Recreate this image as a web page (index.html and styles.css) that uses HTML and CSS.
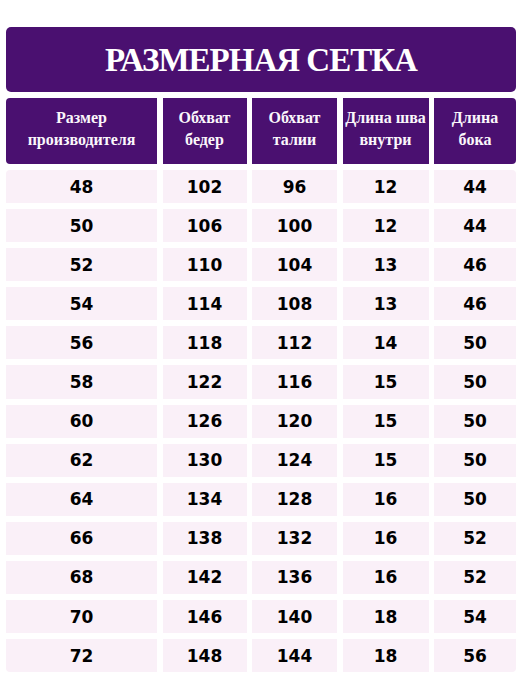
FILE: index.html
```html
<!DOCTYPE html>
<html lang="ru">
<head>
<meta charset="utf-8">
<link rel="stylesheet" href="styles.css">
</head>
<body>
<div class="sheet">
  <div class="title">РАЗМЕРНАЯ СЕТКА</div>
  <div class="grid">
    <div class="hd first">Размер<br>производителя</div>
    <div class="hd">Обхват<br>бедер</div>
    <div class="hd">Обхват<br>талии</div>
    <div class="hd">Длина шва<br>внутри</div>
    <div class="hd last">Длина<br>бока</div>

    <div class="c tl">48</div><div class="c">102</div><div class="c">96</div><div class="c">12</div><div class="c tr">44</div>
    <div class="c">50</div><div class="c">106</div><div class="c">100</div><div class="c">12</div><div class="c">44</div>
    <div class="c">52</div><div class="c">110</div><div class="c">104</div><div class="c">13</div><div class="c">46</div>
    <div class="c">54</div><div class="c">114</div><div class="c">108</div><div class="c">13</div><div class="c">46</div>
    <div class="c">56</div><div class="c">118</div><div class="c">112</div><div class="c">14</div><div class="c">50</div>
    <div class="c">58</div><div class="c">122</div><div class="c">116</div><div class="c">15</div><div class="c">50</div>
    <div class="c">60</div><div class="c">126</div><div class="c">120</div><div class="c">15</div><div class="c">50</div>
    <div class="c">62</div><div class="c">130</div><div class="c">124</div><div class="c">15</div><div class="c">50</div>
    <div class="c">64</div><div class="c">134</div><div class="c">128</div><div class="c">16</div><div class="c">50</div>
    <div class="c">66</div><div class="c">138</div><div class="c">132</div><div class="c">16</div><div class="c">52</div>
    <div class="c">68</div><div class="c">142</div><div class="c">136</div><div class="c">16</div><div class="c">52</div>
    <div class="c">70</div><div class="c">146</div><div class="c">140</div><div class="c">18</div><div class="c">54</div>
    <div class="c bl">72</div><div class="c">148</div><div class="c">144</div><div class="c">18</div><div class="c br">56</div>
  </div>
</div>
</body>
</html>
```

FILE: styles.css
```css
html, body {
  margin: 0;
  padding: 0;
  background: #ffffff;
}
.sheet {
  padding: 27px 0 0 6px;
  width: 510px;
}
.title {
  height: 65px;
  background: #4a1070;
  border-radius: 5px;
  color: #ffffff;
  font-family: "Liberation Serif", "DejaVu Serif", serif;
  font-weight: bold;
  font-size: 33px;
  letter-spacing: -1px;
  display: flex;
  align-items: center;
  justify-content: center;
  padding-top: 1px;
  box-sizing: border-box;
}
.grid {
  margin-top: 6px;
  display: grid;
  grid-template-columns: 151px 84px 85px 86px 82px;
  column-gap: 5.5px;
  grid-template-rows: 66px;
  grid-auto-rows: 33.1px;
  row-gap: 6px;
}
.hd {
  background: #4a1070;
  color: #fbf7fb;
  font-family: "Liberation Serif", "DejaVu Serif", serif;
  font-weight: bold;
  font-size: 16px;
  line-height: 22px;
  display: flex;
  align-items: center;
  justify-content: center;
  text-align: center;
  padding-bottom: 4px;
  box-sizing: border-box;
}
.hd.first { border-radius: 4px 0 0 4px; }
.hd.last { border-radius: 0 4px 4px 0; }
.c {
  background: #faf0f8;
  color: #000000;
  font-family: "DejaVu Sans", Verdana, sans-serif;
  font-weight: bold;
  font-size: 17px;
  display: flex;
  align-items: center;
  justify-content: center;
}
.tl { border-top-left-radius: 4px; }
.tr { border-top-right-radius: 4px; }
.bl { border-bottom-left-radius: 4px; }
.br { border-bottom-right-radius: 4px; }
```
